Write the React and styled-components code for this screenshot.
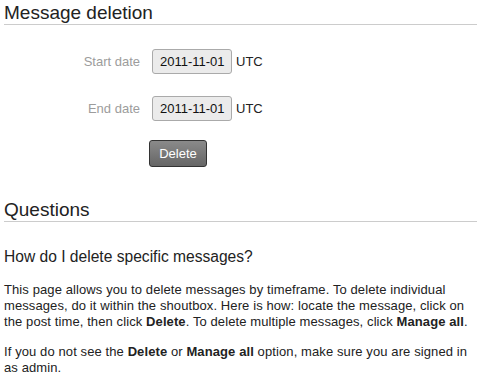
import React from "react";
import styled, { createGlobalStyle } from "styled-components";

const Global = createGlobalStyle`
  html, body { margin: 0; padding: 0; background: #fff; }
  body { font-family: "Liberation Sans", Arial, sans-serif; color: #222; }
`;

const Page = styled.div`
  padding: 2px 5px 0 4px;
`;

const Heading = styled.h2`
  margin: 0;
  font-size: 19px;
  font-weight: normal;
  line-height: 22px;
  color: #222;
  border-bottom: 1px solid #ccc;
  margin-top: ${(p) => p.$top || 0}px;
`;

const Form = styled.div`
  display: grid;
  grid-template-columns: 136px auto;
  column-gap: 12px;
  row-gap: 22px;
  margin-top: 24px;
  align-items: center;
`;

const Label = styled.label`
  text-align: right;
  font-size: 13px;
  color: #9c9c9c;
`;

const Field = styled.div`
  display: flex;
  align-items: center;
  gap: 4px;
  font-size: 13px;
  color: #222;
`;

const DateInput = styled.div`
  box-sizing: border-box;
  width: 80px;
  height: 25px;
  border: 1px solid #aaa;
  border-radius: 3px;
  background: #ebebeb;
  font-size: 13px;
  color: #111;
  display: flex;
  align-items: center;
  padding-left: 7px;
`;

const ButtonRow = styled.div`
  grid-column: 2;
  margin-left: -3px;
  margin-top: -3px;
`;

const Button = styled.button`
  box-sizing: border-box;
  width: 58px;
  height: 27px;
  border: 1px solid #333;
  border-radius: 3px;
  background: linear-gradient(#8a8a8a, #666);
  color: #fff;
  font-family: "Liberation Sans", Arial, sans-serif;
  font-size: 13px;
  padding: 0;
`;

const SubHeading = styled.h3`
  margin: 25px 0 0;
  font-size: 15.6px;
  font-weight: normal;
  line-height: 20px;
  color: #222;
`;

const Para = styled.p`
  margin: ${(p) => p.$top || 0}px 0 0;
  font-size: 13px;
  letter-spacing: 0.1px;
  line-height: 16px;
  color: #222;
`;

export default function App() {
  return (
    <>
      <Global />
      <Page>
        <Heading>Message deletion</Heading>
        <Form>
          <Label>Start date</Label>
          <Field>
            <DateInput>2011-11-01</DateInput>
            UTC
          </Field>
          <Label>End date</Label>
          <Field>
            <DateInput>2011-11-01</DateInput>
            UTC
          </Field>
          <ButtonRow>
            <Button>Delete</Button>
          </ButtonRow>
        </Form>
        <Heading $top={32}>Questions</Heading>
        <SubHeading>How do I delete specific messages?</SubHeading>
        <Para $top={15}>
          This page allows you to delete messages by timeframe. To delete individual
          messages, do it within the shoutbox. Here is how: locate the message, click on
          the post time, then click <b>Delete</b>. To delete multiple messages, click{" "}
          <b>Manage all</b>.
        </Para>
        <Para $top={14}>
          If you do not see the <b>Delete</b> or <b>Manage all</b> option, make sure you
          are signed in as admin.
        </Para>
      </Page>
    </>
  );
}
